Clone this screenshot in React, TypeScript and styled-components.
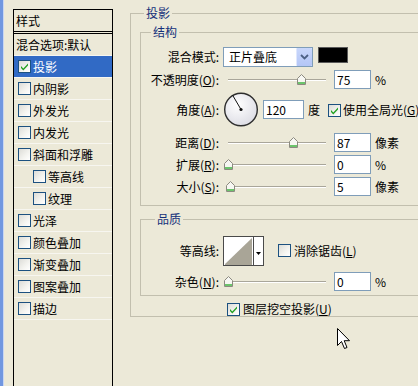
import React from 'react';
import styled, { createGlobalStyle } from 'styled-components';

const Global = createGlobalStyle`
  html, body { margin: 0; padding: 0; background: #ece9d8; }
  body {
    font-family: "Noto Sans CJK SC", "Noto Sans", sans-serif;
    font-size: 12px;
    color: #000;
  }
  * { box-sizing: border-box; }
`;

const Dialog = styled.div`
  width: 418px;
  height: 386px;
  overflow: hidden;
  position: relative;
  display: flex;
  background: #ece9d8;
  font-family: "Noto Sans CJK SC", "Noto Sans", sans-serif;
  font-size: 12px;
  line-height: 14px;
  color: #000;
`;

const Frame = styled.div`
  flex: none;
  width: 4px;
  background: #7197e0;
  border-right: 1px solid #c9d6f2;
`;

const Side = styled.div`
  flex: none;
  padding: 9px 0 0 9px;
`;

const StyleList = styled.div`
  width: 100px;
  height: 400px;
  border: 1px solid #000;
  background: #ece9d8;
`;

const ListHeader = styled.div`
  height: 24px;
  border-bottom: 3px double #000;
  display: flex;
  align-items: center;
  padding-left: 2px;
`;

const ListItem = styled.div<{ $indent?: number; $selected?: boolean }>`
  height: 22px;
  display: flex;
  align-items: center;
  gap: 2px;
  padding-left: ${(p) => p.$indent ?? 4}px;
  border-bottom: 1px solid #f7f6f0;
  background: ${(p) => (p.$selected ? '#316ac5' : 'transparent')};
  color: ${(p) => (p.$selected ? '#fff' : '#000')};
  white-space: nowrap;
`;

const Box = styled.span<{ $checked?: boolean }>`
  flex: none;
  width: 13px;
  height: 13px;
  border: 1px solid #1c5180;
  background: linear-gradient(135deg, #dcdcd7 0%, #f4f4f0 60%, #ffffff 100%);
  display: inline-flex;
  align-items: center;
  justify-content: center;
`;

const Check: React.FC<{ checked?: boolean }> = ({ checked }) => (
  <Box $checked={checked}>
    {checked && (
      <svg width="9" height="9" viewBox="0 0 9 9">
        <path d="M1 4 L3.3 6.5 L8 1.5 L8 3.6 L3.3 8.4 L1 6 Z" fill="#21a121" />
      </svg>
    )}
  </Box>
);

const Main = styled.div`
  flex: none;
  width: 300px;
  margin-left: 17px;
  padding-top: 6px;
`;

const Group = styled.fieldset<{ $mt?: number }>`
  margin: ${(p) => p.$mt ?? 0}px 0 0 0;
  padding: 0;
  min-width: 0;
  border: 1px solid #c2bfae;
`;

const Legend = styled.legend<{ $ml: number }>`
  margin-left: ${(p) => p.$ml}px;
  padding: 0 2px;
  line-height: 14px;
  color: #14307a;
`;

const GroupBody = styled.div<{ $pt: number; $pb: number; $pl?: number }>`
  padding: ${(p) => p.$pt}px 0 ${(p) => p.$pb}px ${(p) => p.$pl ?? 0}px;
`;

const Row = styled.div<{ $h: number; $mt?: number; $pl?: number }>`
  display: flex;
  align-items: center;
  height: ${(p) => p.$h}px;
  margin-top: ${(p) => p.$mt ?? 0}px;
  padding-left: ${(p) => p.$pl ?? 0}px;
  white-space: nowrap;
`;

const Label = styled.span`
  flex: none;
  width: 78px;
  margin-right: 4px;
  text-align: right;
  white-space: nowrap;
`;

const Field = styled.div<{ $w: number; $ml?: number }>`
  flex: none;
  width: ${(p) => p.$w}px;
  height: 19px;
  margin-left: ${(p) => p.$ml ?? 0}px;
  border: 1px solid #7f9db9;
  background: #fff;
  padding-left: 2px;
  line-height: 17px;
`;

const Unit = styled.span<{ $ml?: number }>`
  margin-left: ${(p) => p.$ml ?? 4}px;
`;

const Text = styled.span<{ $ml?: number }>`
  margin-left: ${(p) => p.$ml ?? 0}px;
`;

const Select = styled.div`
  flex: none;
  width: 90px;
  height: 20px;
  border: 1px solid #7f9db9;
  background: #fff;
  display: flex;
  align-items: center;
  padding: 0 0 0 5px;
`;

const SelectText = styled.span`
  flex: 1;
`;

const SelectArrow = styled.span`
  flex: none;
  width: 16px;
  height: 18px;
  background: linear-gradient(180deg, #c9d7fb, #b4c6f6);
  border-left: 1px solid #dfe7fd;
  border-radius: 1px;
  display: flex;
  align-items: center;
  justify-content: center;
`;

const Swatch = styled.div`
  flex: none;
  align-self: flex-start;
  width: 30px;
  height: 16px;
  margin-left: 5px;
  background: #000;
  border: 1px solid #5a5a5a;
`;

const SliderWrap = styled.div`
  position: relative;
  flex: none;
  width: 106px;
  height: 19px;
  margin-right: 5px;
  display: flex;
  align-items: center;
  padding: 0 3px 0 5px;
`;

const Track = styled.div`
  flex: 1;
  height: 2px;
  border-top: 1px solid #a9a69a;
  border-bottom: 1px solid #ffffff;
`;

const Thumb = styled.svg`
  position: absolute;
  top: 4px;
`;

const Slider: React.FC<{ value: number }> = ({ value }) => (
  <SliderWrap>
    <Track />
    <Thumb width="9" height="11" viewBox="0 0 9 11" style={{ left: 5 + value * 98 - 4.5 }}>
      <path d="M4.5 0.5 L8.5 4.5 L8.5 10.5 L0.5 10.5 L0.5 4.5 Z" fill="#f7f7f2" stroke="#8c8a80" />
      <rect x="1" y="8" width="7" height="2" fill="#6cc46c" />
    </Thumb>
  </SliderWrap>
);

const DialSvg = styled.svg`
  flex: none;
`;

const Dial: React.FC = () => (
  <DialSvg width="36" height="35" viewBox="0 0 36 35">
    <defs>
      <radialGradient id="dg" cx="40%" cy="35%" r="70%">
        <stop offset="0%" stopColor="#ffffff" />
        <stop offset="100%" stopColor="#dcdce4" />
      </radialGradient>
    </defs>
    <circle cx="18" cy="17.5" r="16.3" fill="url(#dg)" stroke="#2e2e2e" strokeWidth="1.4" />
    <line x1="18" y1="17.5" x2="9.6" y2="3.2" stroke="#111" strokeWidth="1" />
    <circle cx="18" cy="17.5" r="1.6" fill="#111" />
  </DialSvg>
);

const ContourBox = styled.div`
  flex: none;
  width: 41px;
  height: 30px;
  border: 1px solid #4a4a4a;
  background: #fff;
  display: flex;
`;

const ContourArt = styled.svg`
  flex: none;
`;

const ContourDrop = styled.div`
  flex: 1;
  border-left: 1px solid #4a4a4a;
  display: flex;
  align-items: center;
  justify-content: center;
  padding-top: 4px;
`;

const Cursor = styled.svg`
  position: absolute;
  left: 337px;
  top: 328px;
`;

const U = styled.u`
  text-decoration: underline;
`;

const items: { label: string; indent?: number; checked?: boolean; selected?: boolean }[] = [
  { label: '投影', checked: true, selected: true },
  { label: '内阴影' },
  { label: '外发光' },
  { label: '内发光' },
  { label: '斜面和浮雕' },
  { label: '等高线', indent: 19 },
  { label: '纹理', indent: 19 },
  { label: '光泽' },
  { label: '颜色叠加' },
  { label: '渐变叠加' },
  { label: '图案叠加' },
  { label: '描边' },
];

export default function App() {
  return (
    <>
      <Global />
      <Dialog>
        <Frame />
        <Side>
          <StyleList>
            <ListHeader>样式</ListHeader>
            <ListItem $indent={2}>混合选项:默认</ListItem>
            {items.map((it) => (
              <ListItem key={it.label} $indent={it.indent} $selected={it.selected}>
                <Check checked={it.checked} />
                <span>{it.label}</span>
              </ListItem>
            ))}
          </StyleList>
        </Side>
        <Main>
          <Group>
            <Legend $ml={13}>投影</Legend>
            <GroupBody $pt={5} $pb={0} $pl={9}>
              <Group>
                <Legend $ml={10}>结构</Legend>
                <GroupBody $pt={8} $pb={9}>
                  <Row $h={20}>
                    <Label>混合模式:</Label>
                    <Select>
                      <SelectText>正片叠底</SelectText>
                      <SelectArrow>
                        <svg width="9" height="6" viewBox="0 0 9 6">
                          <path d="M1 1 L4.5 4.5 L8 1" fill="none" stroke="#4d6185" strokeWidth="1.8" />
                        </svg>
                      </SelectArrow>
                    </Select>
                    <Swatch />
                  </Row>
                  <Row $h={19} $mt={3}>
                    <Label>
                      不透明度(<U>O</U>):
                    </Label>
                    <Slider value={0.745} />
                    <Field $w={37}>75</Field>
                    <Unit>%</Unit>
                  </Row>
                  <Row $h={35} $mt={3}>
                    <Label>
                      角度(<U>A</U>):
                    </Label>
                    <Dial />
                    <Field $w={41} $ml={4}>
                      120
                    </Field>
                    <Unit>度</Unit>
                    <Text $ml={8}>
                      <Check checked />
                    </Text>
                    <Text $ml={2}>
                      使用全局光(<U>G</U>)
                    </Text>
                  </Row>
                  <Row $h={19} $mt={6}>
                    <Label>
                      距离(<U>D</U>):
                    </Label>
                    <Slider value={0.673} />
                    <Field $w={37}>87</Field>
                    <Unit>像素</Unit>
                  </Row>
                  <Row $h={19} $mt={3}>
                    <Label>
                      扩展(<U>R</U>):
                    </Label>
                    <Slider value={0} />
                    <Field $w={37}>0</Field>
                    <Unit>%</Unit>
                  </Row>
                  <Row $h={19} $mt={3}>
                    <Label>
                      大小(<U>S</U>):
                    </Label>
                    <Slider value={0.03} />
                    <Field $w={37}>5</Field>
                    <Unit>像素</Unit>
                  </Row>
                </GroupBody>
              </Group>
              <Group $mt={6}>
                <Legend $ml={14}>品质</Legend>
                <GroupBody $pt={10} $pb={4}>
                  <Row $h={30}>
                    <Label>等高线:</Label>
                    <ContourBox>
                      <ContourArt width="29" height="28" viewBox="0 0 29 28">
                        <path d="M1 27 L28 1 L28 28 L1 28 Z" fill="#a9a597" />
                      </ContourArt>
                      <ContourDrop>
                        <svg width="5" height="3" viewBox="0 0 5 3">
                          <path d="M0 0 L5 0 L2.5 3 Z" fill="#000" />
                        </svg>
                      </ContourDrop>
                    </ContourBox>
                    <Text $ml={14}>
                      <Check />
                    </Text>
                    <Text $ml={3}>
                      消除锯齿(<U>L</U>)
                    </Text>
                  </Row>
                  <Row $h={19} $mt={6}>
                    <Label>
                      杂色(<U>N</U>):
                    </Label>
                    <Slider value={0} />
                    <Field $w={37}>0</Field>
                    <Unit>%</Unit>
                  </Row>
                </GroupBody>
              </Group>
              <Row $h={14} $mt={6} $pl={87}>
                <Check checked />
                <Text $ml={3}>
                  图层挖空投影(<U>U</U>)
                </Text>
              </Row>
            </GroupBody>
          </Group>
        </Main>
        <Cursor width="14" height="22" viewBox="0 0 14 22">
          <path
            d="M0.5 0.5 L0.5 17.5 L4.5 13.5 L7.5 20.5 L10 19.5 L7.2 12.7 L12.5 12.7 Z"
            fill="#fff"
            stroke="#000"
            strokeWidth="1"
            strokeLinejoin="miter"
          />
        </Cursor>
      </Dialog>
    </>
  );
}
